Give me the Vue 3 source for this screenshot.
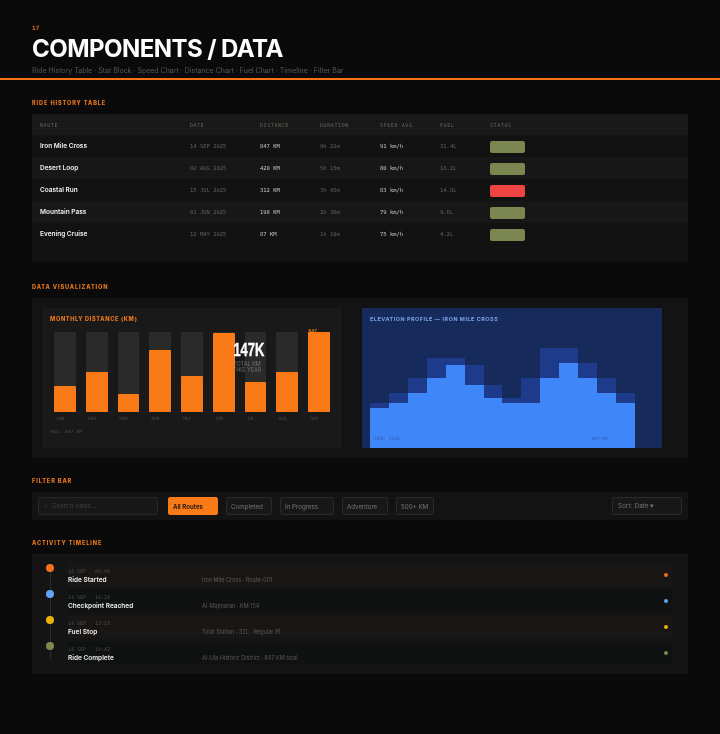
<script setup>
const rides = [
  { route: 'Iron Mile Cross', date: '14 SEP 2025', dist: '847 KM', dur: '9h 22m', speed: '91 km/h', fuel: '31.4L', status: 'ok' },
  { route: 'Desert Loop', date: '02 AUG 2025', dist: '420 KM', dur: '5h 15m', speed: '80 km/h', fuel: '18.2L', status: 'ok' },
  { route: 'Coastal Run', date: '15 JUL 2025', dist: '312 KM', dur: '3h 45m', speed: '83 km/h', fuel: '14.8L', status: 'bad' },
  { route: 'Mountain Pass', date: '01 JUN 2025', dist: '198 KM', dur: '2h 30m', speed: '79 km/h', fuel: '9.6L', status: 'ok' },
  { route: 'Evening Cruise', date: '12 MAY 2025', dist: '87 KM', dur: '1h 10m', speed: '75 km/h', fuel: '4.2L', status: 'ok' }
]
const heads = ['ROUTE', 'DATE', 'DISTANCE', 'DURATION', 'SPEED AVG', 'FUEL', 'STATUS']
const bars = [
  { m: 'JAN', h: 33 }, { m: 'FEB', h: 50 }, { m: 'MAR', h: 22.5 }, { m: 'APR', h: 77 }, { m: 'MAY', h: 45 },
  { m: 'JUN', h: 99 }, { m: 'JUL', h: 37 }, { m: 'AUG', h: 50 }, { m: 'SEP', h: 100, top: '847' }
]
const back = [45, 55, 70, 90, 90, 83, 63, 50, 70, 100, 100, 85, 70, 55]
const front = [40, 45, 55, 70, 83, 63, 50, 45, 45, 70, 85, 70, 55, 45]
const chips = [
  { t: 'Completed', w: 46 },
  { t: 'In Progress', w: 54 },
  { t: 'Adventure', w: 46 },
  { t: '500+ KM', w: 38 }
]
const events = [
  { time: '14 SEP  \u00a006:00', title: 'Ride Started', desc: 'Iron Mile Cross · Route-001', color: '#f97316' },
  { time: '14 SEP  \u00a010:28', title: 'Checkpoint Reached', desc: 'Al-Majmaran · KM 154', color: '#60a5fa' },
  { time: '14 SEP  \u00a012:15', title: 'Fuel Stop', desc: 'Total Station · 32L · Regular 91', color: '#eab308' },
  { time: '14 SEP  \u00a014:42', title: 'Ride Complete', desc: 'Al-Ula Historic District · 847 KM total', color: '#7c8a4e' }
]
</script>

<template>
  <div class="page">
    <header class="head">
      <div class="num">17</div>
      <h1 class="title">COMPONENTS / DATA</h1>
      <div class="sub">Ride History Table · Stat Block · Speed Chart · Distance Chart · Fuel Chart · Timeline · Filter Bar</div>
    </header>

    <main class="main">
      <section class="sec sec-table">
        <h2 class="label">RIDE HISTORY TABLE</h2>
        <div class="table">
          <div class="row row-head">
            <span v-for="h in heads" :key="h" class="th">{{ h }}</span>
          </div>
          <div v-for="r in rides" :key="r.route" class="row row-body">
            <span class="route">{{ r.route }}</span>
            <span class="mono dim">{{ r.date }}</span>
            <span class="mono bright">{{ r.dist }}</span>
            <span class="mono dim">{{ r.dur }}</span>
            <span class="mono bright">{{ r.speed }}</span>
            <span class="mono dim">{{ r.fuel }}</span>
            <span class="badge" :class="r.status"></span>
          </div>
        </div>
      </section>

      <section class="sec sec-viz">
        <h2 class="label">DATA VISUALIZATION</h2>
        <div class="viz">
          <div class="card dist">
            <div class="card-title">MONTHLY DISTANCE (KM)</div>
            <div class="bars">
              <div v-for="b in bars" :key="b.m" class="bar-col">
                <div class="track">
                  <div class="fill" :style="{ height: b.h + '%' }"></div>
                  <span v-if="b.top" class="bar-top">{{ b.top }}</span>
                </div>
                <div class="bar-label">{{ b.m }}</div>
              </div>
            </div>
            <div class="max">MAX: 847 KM</div>
            <div class="stat">
              <div class="stat-num">147K</div>
              <div class="stat-text">TOTAL KM<br>THIS YEAR</div>
            </div>
          </div>
          <div class="card elev">
            <div class="elev-title">ELEVATION PROFILE — IRON MILE CROSS</div>
            <div class="elev-chart">
              <div class="layer">
                <i v-for="(v, i) in back" :key="i" class="step step-back" :style="{ height: v + '%' }"></i>
              </div>
              <div class="layer">
                <i v-for="(v, i) in front" :key="i" class="step step-front" :style="{ height: v + '%' }"></i>
              </div>
              <div class="elev-notes"><span>MIN: 312m</span><span>847 KM</span></div>
            </div>
          </div>
        </div>
      </section>

      <section class="sec sec-filter">
        <h2 class="label">FILTER BAR</h2>
        <div class="filter">
          <div class="search"><span class="lens">⌕</span>Search rides...</div>
          <button class="chip active">All Routes</button>
          <button v-for="c in chips" :key="c.t" class="chip" :style="{ width: c.w + 'px' }">{{ c.t }}</button>
          <div class="sort">Sort: Date ▾</div>
        </div>
      </section>

      <section class="sec">
        <h2 class="label">ACTIVITY TIMELINE</h2>
        <div class="timeline">
          <div v-for="(e, i) in events" :key="e.title" class="event" :class="{ alt: i % 2 === 1 }">
            <div class="rail">
              <span class="dot" :style="{ background: e.color }"></span>
              <span class="line"></span>
            </div>
            <div class="event-body">
              <div class="event-time">{{ e.time }}</div>
              <div class="event-main">
                <span class="event-title">{{ e.title }}</span>
                <span class="event-desc">{{ e.desc }}</span>
              </div>
              <span class="mini" :style="{ background: e.color }"></span>
            </div>
          </div>
        </div>
      </section>
    </main>
  </div>
</template>

<style>
html, body { margin: 0; background: #0a0a0a; }
</style>

<style scoped>
.page {
  width: 720px;
  height: 734px;
  overflow: hidden;
  background: #0a0a0a;
  font-family: Inter, "Liberation Sans", sans-serif;
  color: #fff;
  box-sizing: border-box;
  filter: blur(0.35px);
}
.head {
  height: 80px;
  box-sizing: border-box;
  padding: 24px 32px 0;
  border-bottom: 2px solid #f97316;
}
.num {
  font: 700 6px/7px "DejaVu Sans Mono", monospace;
  letter-spacing: 0.2px;
  color: #d9741c;
}
.title {
  margin: 3px 0 0;
  font-size: 24px;
  line-height: 30px;
  font-weight: 700;
  letter-spacing: -0.55px;
  color: #fff;
}
.sub {
  margin-top: 2px;
  font-size: 7px;
  line-height: 10px;
  color: #5a5754;
}
.main {
  padding: 20px 32px 0;
  display: flex;
  flex-direction: column;
}
.sec { display: flex; flex-direction: column; }
.sec-table { margin-bottom: 22px; }
.sec-viz { margin-bottom: 20px; }
.sec-filter { margin-bottom: 20px; }
.label {
  margin: 0 0 7px;
  font-size: 5.6px;
  line-height: 7px;
  font-weight: 800;
  letter-spacing: 0.88px;
  color: #e8781c;
}
.table {
  height: 148px;
  background: #121212;
}
.row {
  display: grid;
  grid-template-columns: 150px 70px 60px 60px 60px 50px 1fr;
  align-items: center;
  padding: 0 8px;
}
.row-head { height: 21px; background: #191919; }
.th {
  font: 400 5px/8px "DejaVu Sans Mono", monospace;
  letter-spacing: 0.6px;
  color: #6a6865;
}
.row-body { height: 22px; }
.row-body:nth-child(odd) { background: #171717; }
.route {
  font-size: 6.5px;
  font-weight: 600;
  color: #f0f0f0;
}
.mono {
  font-family: "DejaVu Sans Mono", monospace;
  font-size: 5.5px;
}
.dim { color: #63615e; }
.bright { color: #c8c8c8; }
.badge {
  display: block;
  width: 35px;
  height: 12px;
  border-radius: 2px;
  margin-top: 2px;
}
.badge.ok { background: #7b8650; }
.badge.bad { background: #ef4444; }

.viz {
  height: 160px;
  box-sizing: border-box;
  padding: 10px;
  background: #131313;
  display: grid;
  grid-template-columns: 300px 300px;
  gap: 20px;
}
.card { height: 140px; box-sizing: border-box; position: relative; }
.dist {
  background: #191919;
  padding: 8px 12px 0 8px;
}
.card-title {
  font-size: 5.6px;
  line-height: 7px;
  font-weight: 800;
  letter-spacing: 0.65px;
  color: #e8781c;
}
.bars {
  display: flex;
  gap: 10px;
  margin: 9px 0 0 4px;
}
.bar-col { width: 22px; }
.track {
  height: 80px;
  position: relative;
  display: flex;
  align-items: flex-end;
  background: #2a2a28;
}
.fill {
  width: 100%;
  background: #f97a16;
  border-radius: 1px;
}
.bar-top {
  position: absolute;
  top: -3.5px;
  left: 0;
  font: 700 4.5px/5px Inter, sans-serif;
  color: #d9741c;
}
.bar-label {
  margin-top: 4px;
  padding-left: 2px;
  font: 400 4.5px/5px "DejaVu Sans Mono", monospace;
  color: #4c4a47;
}
.max {
  margin-top: 8px;
  font: 400 4.5px/6px "DejaVu Sans Mono", monospace;
  letter-spacing: 0.25px;
  color: #4c4a47;
}
.stat {
  position: absolute;
  left: 185px;
  top: 33px;
  width: 40px;
  text-align: center;
}
.stat-num {
  font-family: "Liberation Sans", sans-serif;
  font-size: 19px;
  line-height: 18px;
  font-weight: 700;
  color: #fff;
  transform: scaleX(0.68);
  -webkit-text-stroke: 0.4px #fff;
}
.stat-text {
  margin-top: 1.5px;
  font-size: 5.5px;
  line-height: 6.8px;
  color: rgba(150, 150, 150, 0.65);
}
.elev {
  background: #172a5c;
  padding: 8px 8px 0;
  border-radius: 1px;
  display: flex;
  flex-direction: column;
}
.elev-title {
  font-size: 5.4px;
  line-height: 7px;
  font-weight: 700;
  letter-spacing: 0.55px;
  color: #7aa3e6;
}
.elev-chart {
  position: relative;
  margin-top: auto;
  width: 265px;
  height: 100px;
}
.layer {
  position: absolute;
  inset: 0;
  display: flex;
  align-items: flex-end;
}
.step { flex: 1; display: block; }
.step-back { background: #1e3a8a; }
.step-front { background: #3f86f8; }
.elev-notes {
  position: absolute;
  left: 5px;
  right: 27px;
  bottom: 6px;
  display: flex;
  justify-content: space-between;
  font: 400 4.5px/6px "DejaVu Sans Mono", monospace;
  color: #2f62b8;
}

.filter {
  height: 28px;
  box-sizing: border-box;
  padding: 0 6px;
  background: #131313;
  display: flex;
  align-items: center;
  gap: 8px;
}
.search {
  width: 120px;
  height: 18px;
  box-sizing: border-box;
  margin-right: 2px;
  padding-left: 5px;
  display: flex;
  align-items: center;
  gap: 5px;
  background: #181818;
  border: 1px solid #272727;
  border-radius: 2px;
  font-size: 6.5px;
  color: #403f3d;
}
.lens { font-size: 6px; color: #444; }
.chip {
  height: 18px;
  box-sizing: border-box;
  padding: 0 0 0 4px;
  background: #181818;
  border: 1px solid #2a2a2a;
  border-radius: 2px;
  font-family: inherit;
  font-size: 6.2px;
  color: #747474;
  text-align: left;
}
.chip.active {
  width: 50px;
  background: #f97a16;
  border-color: #f97a16;
  color: #111;
  font-weight: 600;
}
.sort {
  margin-left: auto;
  width: 70px;
  height: 18px;
  box-sizing: border-box;
  padding-left: 5px;
  display: flex;
  align-items: center;
  background: #181818;
  border: 1px solid #2a2a2a;
  border-radius: 2px;
  font-size: 6.5px;
  color: #747474;
}

.timeline {
  height: 120px;
  box-sizing: border-box;
  padding: 10px 16px 0 14px;
  background: #141414;
}
.event {
  height: 26px;
  display: flex;
}
.rail {
  width: 8px;
  position: relative;
  margin-right: 14px;
  flex: none;
}
.dot {
  position: absolute;
  top: 0;
  left: 0;
  width: 8px;
  height: 8px;
  border-radius: 50%;
  z-index: 1;
}
.line {
  position: absolute;
  left: 3.5px;
  top: 8px;
  bottom: 0;
  width: 1px;
  background: #2c2c2c;
}
.event:last-child .line { bottom: 9px; }
.event-body {
  flex: 1;
  height: 22px;
  background: #181715;
  position: relative;
}
.event.alt .event-body { background: #101111; }
.event-time {
  padding-top: 4px;
  font: 400 5px/6px "DejaVu Sans Mono", monospace;
  white-space: pre;
  color: #4c4a47;
}
.event-main {
  display: grid;
  grid-template-columns: 134px 1fr;
  align-items: center;
  margin-top: 1px;
  line-height: 10px;
}
.event-title {
  font-size: 6.5px;
  font-weight: 600;
  color: #ededed;
}
.event-desc {
  font-size: 5.5px;
  color: #5c5a58;
}
.mini {
  position: absolute;
  left: 596px;
  top: 9px;
  width: 4px;
  height: 4px;
  border-radius: 50%;
}
</style>
